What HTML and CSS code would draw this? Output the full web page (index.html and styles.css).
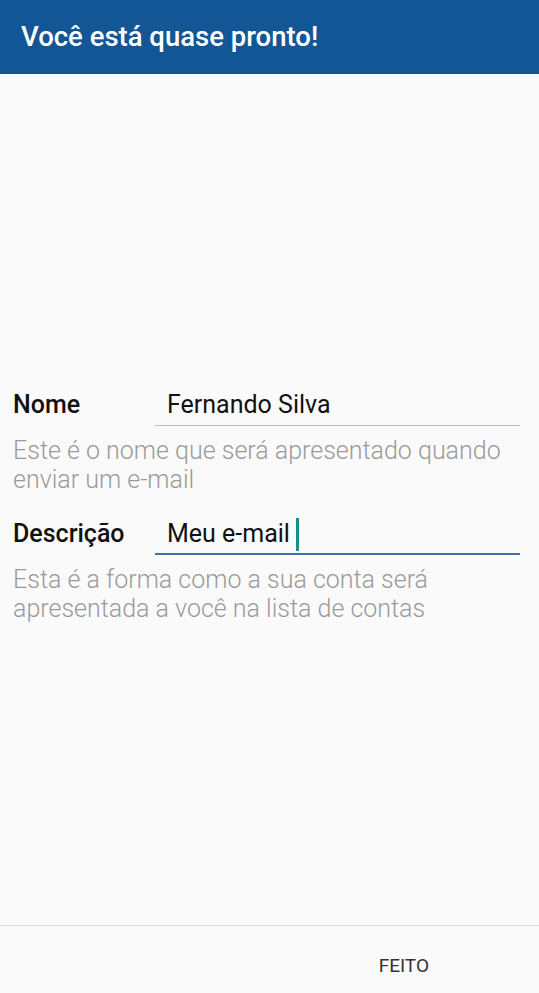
FILE: index.html
```html
<!DOCTYPE html>
<html lang="pt">
<head>
  <meta charset="UTF-8">
  <title>Você está quase pronto!</title>
  <link rel="stylesheet" href="styles.css">
</head>
<body>
  <header class="topbar">
    <h1 class="title">Você está quase pronto!</h1>
  </header>

  <main class="content">
    <form class="account-form">
      <div class="field-row">
        <label class="field-label" for="name">Nome</label>
        <div class="field-input">
          <span class="field-value">Fernando Silva</span>
        </div>
      </div>
      <p class="field-help">Este é o nome que será apresentado quando enviar um e-mail</p>

      <div class="field-row">
        <label class="field-label" for="desc">Descrição</label>
        <div class="field-input focused">
          <span class="field-value">Meu e-mail</span><span class="cursor"></span>
        </div>
      </div>
      <p class="field-help">Esta é a forma como a sua conta será apresentada a você na lista de contas</p>
    </form>
  </main>

  <footer class="bottombar">
    <button type="button" class="done-btn">FEITO</button>
  </footer>
</body>
</html>
```

FILE: styles.css
```css
html, body {
  margin: 0;
  height: 100%;
}
body {
  font-family: Roboto, "Liberation Sans", sans-serif;
  background: #fafafa;
  display: flex;
  flex-direction: column;
}
.topbar {
  background: #135696;
  height: 74px;
  padding: 0 21px;
  display: flex;
  align-items: center;
  box-sizing: border-box;
}
.title {
  margin: 0 0 2px;
  color: #fff;
  font-size: 27.5px;
  font-weight: 500;
}
.content {
  flex: 1;
  padding: 315px 19px 0 13px;
}
.account-form {
  margin: 0;
}
.field-row {
  display: flex;
  align-items: flex-end;
}
.field-label {
  width: 142px;
  flex-shrink: 0;
  font-size: 25px;
  font-weight: 500;
  line-height: 32px;
  padding-bottom: 5px;
  color: #111;
}
.field-input {
  flex: 1;
  display: flex;
  align-items: center;
  height: 32px;
  padding: 0 12px 4px;
  border-bottom: 1px solid #bdbdbd;
}
.field-input.focused {
  border-bottom: 2px solid #3f74a9;
  padding-bottom: 3px;
}
.field-value {
  font-size: 25px;
  color: #111;
  line-height: 32px;
}
.cursor {
  display: inline-block;
  width: 3px;
  height: 33px;
  margin-left: 6px;
  background: #1c8e88;
}
.field-help {
  margin: 10px 0 24px;
  font-size: 25px;
  font-weight: 300;
  line-height: 29px;
  color: #9a9a9a;
}
.bottombar {
  height: 67px;
  border-top: 1px solid #dcdcdc;
  display: flex;
  justify-content: flex-end;
  align-items: center;
  padding-right: 110px;
}
.done-btn {
  background: none;
  border: none;
  padding: 12px 0 0;
  font-family: inherit;
  font-size: 19px;
  color: #333;
}
```
